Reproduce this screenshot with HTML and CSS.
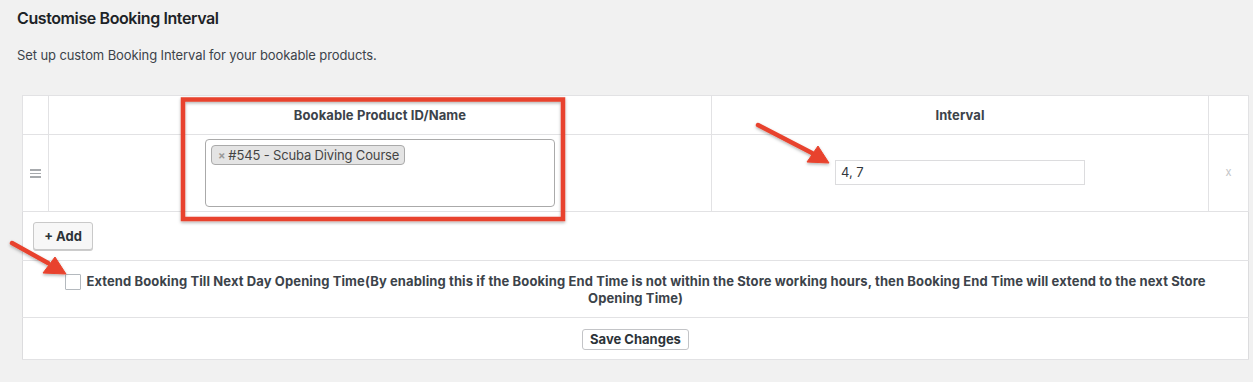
FILE: index.html
```html
<!DOCTYPE html>
<html>
<head>
<meta charset="utf-8">
<link rel="stylesheet" href="styles.css">
</head>
<body>
<div class="page">
  <h2 class="title">Customise Booking Interval</h2>
  <p class="desc">Set up custom Booking Interval for your bookable products.</p>
  <table class="grid">
    <colgroup>
      <col class="c-sort"><col class="c-prod"><col class="c-int"><col class="c-rm">
    </colgroup>
    <thead>
      <tr class="head">
        <th></th>
        <th>Bookable Product ID/Name</th>
        <th>Interval</th>
        <th></th>
      </tr>
    </thead>
    <tbody>
      <tr class="item">
        <td class="sort"><span class="handle"><i></i><i></i><i></i></span></td>
        <td class="prod">
          <div class="select">
            <span class="tag"><span class="tag-x">×</span>#545 - Scuba Diving Course</span>
          </div>
        </td>
        <td class="int"><div class="input">4, 7</div></td>
        <td class="rm">x</td>
      </tr>
    </tbody>
    <tfoot>
      <tr class="addrow"><td colspan="4"><span class="btn add">+ Add</span></td></tr>
      <tr class="checkrow"><td colspan="4"><span class="check"></span>Extend Booking Till Next Day Opening Time(By enabling this if the Booking End Time is not within the Store working hours, then Booking End Time will extend to the next Store Opening Time)</td></tr>
      <tr class="saverow"><td colspan="4"><span class="btn save">Save Changes</span></td></tr>
    </tfoot>
  </table>
</div>
<svg class="annot" width="1253" height="382" viewBox="0 0 1253 382">
  <defs>
    <filter id="sh" x="-20%" y="-20%" width="140%" height="140%">
      <feDropShadow dx="0" dy="1.5" stdDeviation="1.5" flood-color="#000" flood-opacity="0.3"/>
    </filter>
  </defs>
  <g filter="url(#sh)" fill="#e8432d" stroke="#e8432d">
    <rect x="183" y="99.5" width="380" height="119.5" fill="none" stroke-width="4.5"/>
    <line x1="758" y1="125" x2="812" y2="153" stroke-width="4.5" stroke-linecap="round"/>
    <polygon points="829,163 807,162 818,146" stroke-width="1" stroke-linejoin="round"/>
    <line x1="12" y1="243" x2="48" y2="263" stroke-width="4.5" stroke-linecap="round"/>
    <polygon points="66,274 43,273 55,257" stroke-width="1" stroke-linejoin="round"/>
  </g>
</svg>
</body>
</html>
```

FILE: styles.css
```css
html, body {
  margin: 0;
  padding: 0;
}
body {
  background: #f1f1f1;
  font-family: Inter, "Noto Sans", "Liberation Sans", sans-serif;
  color: #3c434a;
  position: relative;
  width: 1253px;
  height: 382px;
  overflow: hidden;
}
.page {
  padding: 0 5px 0 17px;
}
.title {
  margin: 0;
  padding-top: 8px;
  font-size: 16px;
  line-height: 21px;
  font-weight: 600;
  color: #1d2327;
  letter-spacing: -0.4px;
}
.desc {
  margin: 17px 0 0 0;
  font-size: 13px;
  line-height: 18px;
  color: #3c434a;
  letter-spacing: -0.1px;
}
.grid {
  margin: 31px 0 0 5px;
  width: 1226px;
  border-collapse: collapse;
  table-layout: fixed;
  background: #fff;
  border: 1px solid #dcdcde;
}
.c-sort { width: 26px; }
.c-prod { width: 663px; }
.c-int { width: 497px; }
.c-rm { width: 40px; }
.grid th, .grid td {
  padding: 0;
  border: 1px solid #e2e2e4;
}
.head th {
  height: 38px;
  font-size: 13px;
  font-weight: 700;
  color: #3c434a;
  text-align: center;
  vertical-align: middle;
  letter-spacing: 0.1px;
}
.item td {
  vertical-align: top;
}
.sort {
  text-align: center;
}
.handle {
  display: inline-flex;
  flex-direction: column;
  gap: 2px;
  width: 11px;
  margin-top: 34px;
}
.handle i {
  display: block;
  height: 1.5px;
  background: #a7aaad;
}
.select {
  display: block;
  box-sizing: border-box;
  width: 350px;
  height: 68px;
  margin: 4px auto 4px;
  border: 1px solid #aaa;
  border-radius: 4px;
  background: #fff;
  padding: 3px 5px 5px;
  text-align: left;
}
.tag {
  display: inline-flex;
  align-items: center;
  box-sizing: border-box;
  height: 20px;
  padding: 0 5px 0 6px;
  background: #e4e4e4;
  border: 1px solid #aaa;
  border-radius: 4px;
  font-size: 13px;
  color: #444;
  letter-spacing: -0.15px;
}
.tag-x {
  color: #999;
  font-size: 11px;
  font-weight: 700;
  margin-right: 3px;
}
.input {
  display: block;
  box-sizing: border-box;
  width: 250px;
  height: 25px;
  margin: 25px auto 0;
  border: 1px solid #dcdcde;
  padding: 0 0 0 5px;
  font-size: 13px;
  line-height: 23px;
  text-align: left;
  color: #32373c;
}
.rm {
  text-align: center;
  color: #c3c4c7;
  font-size: 11px;
  padding-top: 30px !important;
}
.grid tfoot td {
  border-left: none;
  border-right: none;
}
.addrow td {
  height: 48px;
  padding: 0 0 0 10px;
  vertical-align: middle;
}
.btn {
  display: inline-flex;
  align-items: center;
  justify-content: center;
  box-sizing: border-box;
  border: 1px solid #c9c9c9;
  border-radius: 3px;
  background: #f7f7f7;
  color: #2c3338;
  font-weight: 700;
  font-size: 13px;
}
.add {
  width: 60px;
  height: 28px;
  box-shadow: 0 1px 0 #ccc;
  vertical-align: middle;
}
.checkrow td {
  height: 57px;
  padding: 12px 30px 10px;
  box-sizing: border-box;
  text-align: center;
  font-size: 13px;
  font-weight: 700;
  line-height: 17px;
  color: #3c434a;
  vertical-align: top;
  letter-spacing: 0.11px;
}
.check {
  display: inline-block;
  width: 16px;
  height: 16px;
  box-sizing: border-box;
  border: 1px solid #b4b9be;
  border-radius: 1px;
  background: #fff;
  vertical-align: -4px;
  margin-right: 5px;
}
.saverow td {
  height: 41px;
  text-align: center;
  vertical-align: middle;
}
.save {
  width: 107px;
  height: 21px;
  background: #fff;
  border-color: #c3c4c7;
  vertical-align: middle;
}
.annot {
  position: absolute;
  top: 0;
  left: 0;
  pointer-events: none;
}
```
